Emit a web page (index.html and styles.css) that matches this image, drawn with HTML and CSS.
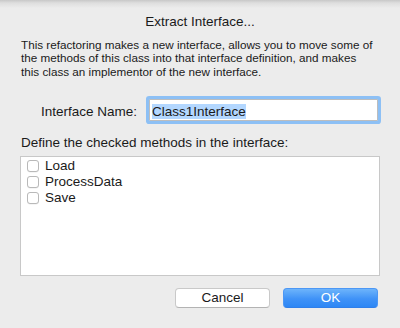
FILE: index.html
```html
<!DOCTYPE html>
<html>
<head>
<meta charset="utf-8">
<link rel="stylesheet" href="styles.css">
</head>
<body>
<div class="dialog">
  <h1 class="title">Extract Interface...</h1>
  <p class="desc">This refactoring makes a new interface, allows you to move some of<br>the methods of this class into that interface definition, and makes<br>this class an implementor of the new interface.</p>
  <div class="name-row">
    <label class="name-label">Interface Name:</label>
    <div class="field"><span class="sel">Class1Interface</span></div>
  </div>
  <div class="list-label">Define the checked methods in the interface:</div>
  <div class="list">
    <div class="item"><span class="check"></span><span class="item-text">Load</span></div>
    <div class="item"><span class="check"></span><span class="item-text">ProcessData</span></div>
    <div class="item"><span class="check"></span><span class="item-text">Save</span></div>
  </div>
  <div class="buttons">
    <button class="btn cancel">Cancel</button>
    <button class="btn ok">OK</button>
  </div>
</div>
</body>
</html>
```
FILE: styles.css
```css
html, body {
  margin: 0;
  padding: 0;
}
body {
  width: 400px;
  height: 328px;
  overflow: hidden;
  background: linear-gradient(to bottom, #c8c8c8 0px, #dedede 3px, #ececec 8px) no-repeat;
  background-color: #ececec;
  background-size: 100% 10px;
  font-family: "Liberation Sans", Arial, Helvetica, sans-serif;
  font-size: 13.5px;
  color: #1a1a1a;
}
.dialog {
  padding: 14px 21px 0 21px;
  display: flex;
  flex-direction: column;
}
.title {
  margin: 0;
  font-size: 13.5px;
  font-weight: normal;
  line-height: 16px;
  text-align: center;
}
.desc {
  margin: 8px 0 0 0;
  font-size: 11.7px;
  line-height: 13.4px;
  white-space: nowrap;
}
.name-row {
  margin-top: 21px;
  display: flex;
  align-items: baseline;
  justify-content: flex-end;
  gap: 12px;
  padding-right: 1px;
}
.name-label {
  line-height: 16px;
}
.field {
  box-sizing: border-box;
  width: 229px;
  height: 22px;
  background: #fff;
  border: 1px solid #bdbdbd;
  box-shadow: 0 0 0 3px #8dc0f5;
  border-radius: 1px;
  padding: 3.5px 0 0 2px;
  line-height: 16px;
}
.sel {
  background: #b3d7ff;
  line-height: normal;
}
.list-label {
  margin-top: 14px;
  line-height: 16px;
}
.list {
  margin-top: 5px;
  margin-left: -1px;
  box-sizing: border-box;
  width: 360px;
  height: 120px;
  background: #fff;
  border: 1px solid #c8c8c8;
  padding: 1px 0 0 6px;
}
.item {
  display: flex;
  align-items: center;
  height: 16px;
  gap: 6px;
}
.check {
  box-sizing: border-box;
  width: 12px;
  height: 12px;
  border: 1px solid #b9b9b9;
  border-radius: 3px;
  background: #fff;
  box-shadow: 0 0.5px 0 rgba(0,0,0,0.08);
}
.item-text {
  line-height: 16px;
}
.buttons {
  margin-top: 12px;
  display: flex;
  justify-content: flex-end;
  gap: 13px;
  padding-right: 1px;
}
.btn {
  box-sizing: border-box;
  width: 95px;
  height: 20px;
  padding: 0;
  margin: 0;
  font-family: "Liberation Sans", Arial, Helvetica, sans-serif;
  font-size: 13.5px;
  line-height: 18px;
  border-radius: 4px;
}
.cancel {
  background: #fff;
  color: #1a1a1a;
  border: 1px solid #c9c9c9;
  border-bottom-color: #b3b3b3;
}
.ok {
  color: #fff;
  border: 1px solid #4c97f5;
  border-bottom-color: #2f7fea;
  background: linear-gradient(to bottom, #6db4fb 0%, #3f92f7 55%, #2d87f5 100%);
}
```
